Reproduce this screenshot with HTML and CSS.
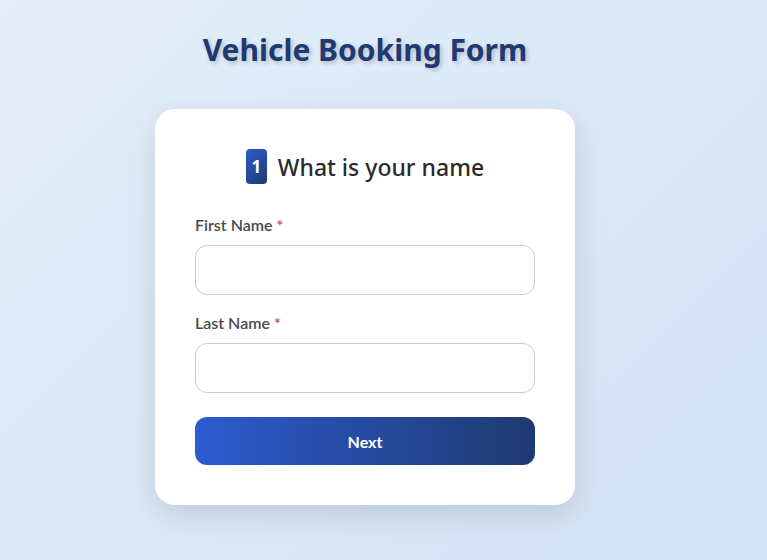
FILE: index.html
```html
<!DOCTYPE html>
<html lang="en">
<head>
  <meta charset="UTF-8">
  <meta name="viewport" content="width=device-width, initial-scale=1.0">
  <title>Vehicle Booking Form</title>
  <link rel="stylesheet" href="styles.css">
</head>
<body>
  <div class="page">
    <h1 class="titulo">Vehicle Booking Form</h1>

    <!-- Paso 1: nombre -->
    <form class="tarjeta">
      <h2 class="paso">
        <span class="numero">1</span>
        What is your name
      </h2>

      <div class="campo">
        <label for="first">First Name <span class="req">*</span></label>
        <input type="text" id="first">
      </div>

      <div class="campo">
        <label for="last">Last Name <span class="req">*</span></label>
        <input type="text" id="last">
      </div>

      <button type="button" class="siguiente">Next</button>
    </form>
  </div>
</body>
</html>
```

FILE: styles.css
```css
* {
  margin: 0;
  padding: 0;
  box-sizing: border-box;
}

body {
  min-height: 560px;
  background: linear-gradient(135deg, #e4eefa, #d2e2f4);
  font-family: "Noto Sans", "Open Sans", sans-serif;
  color: #333;
}

.page {
  width: 730px;
  display: flex;
  flex-direction: column;
  align-items: center;
  padding-top: 28px;
}

.titulo {
  font-size: 30px;
  font-weight: 700;
  color: #1e3a70;
  text-shadow: 2px 2px 4px rgba(0, 0, 0, 0.2);
  line-height: 44px;
}

/* Tarjeta del formulario */
.tarjeta {
  width: 420px;
  margin-top: 37px;
  background: #fff;
  border-radius: 20px;
  padding: 40px;
  box-shadow: 0 10px 30px rgba(0, 0, 0, 0.12);
}

.paso {
  display: flex;
  align-items: center;
  justify-content: center;
  gap: 11px;
  font-size: 23px;
  font-weight: 500;
  color: #2b2b2b;
  height: 35px;
  margin-bottom: 31px;
}

.numero {
  display: inline-flex;
  align-items: center;
  justify-content: center;
  width: 21px;
  height: 35px;
  border-radius: 4px;
  background: linear-gradient(135deg, #2d5bd0, #1f3a70);
  color: #fff;
  font-size: 17px;
  font-weight: 700;
}

.campo {
  margin-bottom: 18px;
}

.campo label {
  display: block;
  font-family: Lato, sans-serif;
  font-size: 16px;
  font-weight: 600;
  color: #4a4a4a;
  margin-bottom: 10px;
  line-height: 20px;
}

.req {
  color: #e0304a;
}

.campo input {
  display: block;
  width: 100%;
  height: 50px;
  border: 1px solid #ccc;
  border-radius: 12px;
  padding: 0 15px;
  font-size: 15px;
  background: #fff;
}

.siguiente {
  display: block;
  width: 100%;
  height: 48px;
  margin-top: 24px;
  border: none;
  border-radius: 12px;
  background: linear-gradient(90deg, #2d5bd0, #1f3a70);
  color: #fff;
  font-family: Lato, sans-serif;
  font-size: 16px;
  font-weight: 700;
  cursor: pointer;
}
```
